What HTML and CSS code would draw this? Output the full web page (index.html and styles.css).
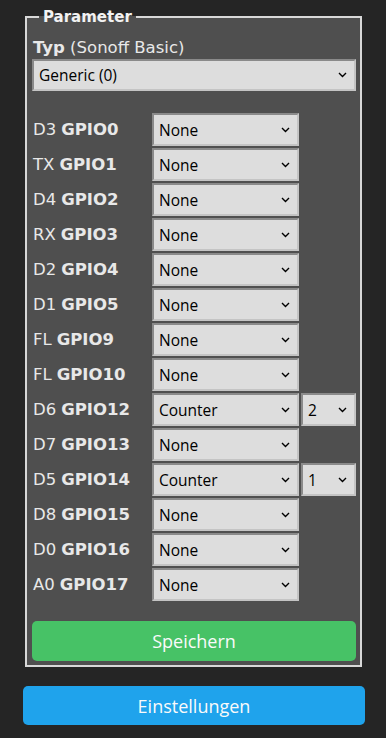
FILE: index.html
```html
<!DOCTYPE html>
<html>
<head>
<meta charset="utf-8">
<link rel="stylesheet" href="styles.css">
</head>
<body>
<div class="page">
  <fieldset class="box">
    <legend class="legend">Parameter</legend>
    <div class="typ"><b>Typ</b> (Sonoff Basic)</div>
    <div class="sel wide"><span>Generic (0)</span><svg class="chev" width="9" height="6" viewBox="0 0 9 6"><path d="M1 1l3.5 3.5L8 1" fill="none" stroke="#000" stroke-width="1.4"/></svg></div>
    <div class="grid">
      <div class="lbl">D3 <b>GPIO0</b></div><div class="sel"><span>None</span><svg class="chev" width="9" height="6" viewBox="0 0 9 6"><path d="M1 1l3.5 3.5L8 1" fill="none" stroke="#000" stroke-width="1.4"/></svg></div><div></div>
      <div class="lbl">TX <b>GPIO1</b></div><div class="sel"><span>None</span><svg class="chev" width="9" height="6" viewBox="0 0 9 6"><path d="M1 1l3.5 3.5L8 1" fill="none" stroke="#000" stroke-width="1.4"/></svg></div><div></div>
      <div class="lbl">D4 <b>GPIO2</b></div><div class="sel"><span>None</span><svg class="chev" width="9" height="6" viewBox="0 0 9 6"><path d="M1 1l3.5 3.5L8 1" fill="none" stroke="#000" stroke-width="1.4"/></svg></div><div></div>
      <div class="lbl">RX <b>GPIO3</b></div><div class="sel"><span>None</span><svg class="chev" width="9" height="6" viewBox="0 0 9 6"><path d="M1 1l3.5 3.5L8 1" fill="none" stroke="#000" stroke-width="1.4"/></svg></div><div></div>
      <div class="lbl">D2 <b>GPIO4</b></div><div class="sel"><span>None</span><svg class="chev" width="9" height="6" viewBox="0 0 9 6"><path d="M1 1l3.5 3.5L8 1" fill="none" stroke="#000" stroke-width="1.4"/></svg></div><div></div>
      <div class="lbl">D1 <b>GPIO5</b></div><div class="sel"><span>None</span><svg class="chev" width="9" height="6" viewBox="0 0 9 6"><path d="M1 1l3.5 3.5L8 1" fill="none" stroke="#000" stroke-width="1.4"/></svg></div><div></div>
      <div class="lbl">FL <b>GPIO9</b></div><div class="sel"><span>None</span><svg class="chev" width="9" height="6" viewBox="0 0 9 6"><path d="M1 1l3.5 3.5L8 1" fill="none" stroke="#000" stroke-width="1.4"/></svg></div><div></div>
      <div class="lbl">FL <b>GPIO10</b></div><div class="sel"><span>None</span><svg class="chev" width="9" height="6" viewBox="0 0 9 6"><path d="M1 1l3.5 3.5L8 1" fill="none" stroke="#000" stroke-width="1.4"/></svg></div><div></div>
      <div class="lbl">D6 <b>GPIO12</b></div><div class="sel"><span>Counter</span><svg class="chev" width="9" height="6" viewBox="0 0 9 6"><path d="M1 1l3.5 3.5L8 1" fill="none" stroke="#000" stroke-width="1.4"/></svg></div><div class="sel"><span>2</span><svg class="chev" width="9" height="6" viewBox="0 0 9 6"><path d="M1 1l3.5 3.5L8 1" fill="none" stroke="#000" stroke-width="1.4"/></svg></div>
      <div class="lbl">D7 <b>GPIO13</b></div><div class="sel"><span>None</span><svg class="chev" width="9" height="6" viewBox="0 0 9 6"><path d="M1 1l3.5 3.5L8 1" fill="none" stroke="#000" stroke-width="1.4"/></svg></div><div></div>
      <div class="lbl">D5 <b>GPIO14</b></div><div class="sel"><span>Counter</span><svg class="chev" width="9" height="6" viewBox="0 0 9 6"><path d="M1 1l3.5 3.5L8 1" fill="none" stroke="#000" stroke-width="1.4"/></svg></div><div class="sel"><span>1</span><svg class="chev" width="9" height="6" viewBox="0 0 9 6"><path d="M1 1l3.5 3.5L8 1" fill="none" stroke="#000" stroke-width="1.4"/></svg></div>
      <div class="lbl">D8 <b>GPIO15</b></div><div class="sel"><span>None</span><svg class="chev" width="9" height="6" viewBox="0 0 9 6"><path d="M1 1l3.5 3.5L8 1" fill="none" stroke="#000" stroke-width="1.4"/></svg></div><div></div>
      <div class="lbl">D0 <b>GPIO16</b></div><div class="sel"><span>None</span><svg class="chev" width="9" height="6" viewBox="0 0 9 6"><path d="M1 1l3.5 3.5L8 1" fill="none" stroke="#000" stroke-width="1.4"/></svg></div><div></div>
      <div class="lbl">A0 <b>GPIO17</b></div><div class="sel"><span>None</span><svg class="chev" width="9" height="6" viewBox="0 0 9 6"><path d="M1 1l3.5 3.5L8 1" fill="none" stroke="#000" stroke-width="1.4"/></svg></div><div></div>
    </div>
    <button class="btn save">Speichern</button>
  </fieldset>
  <button class="btn cfg">Einstellungen</button>
</div>
</body>
</html>
```
FILE: styles.css
```css
html, body {
  margin: 0;
  padding: 0;
  background: #252525;
}
body {
  font-family: "DejaVu Sans", Verdana, sans-serif;
  font-size: 16.5px;
  color: #e8e8e8;
}
.page {
  width: 342px;
  margin-left: 23px;
  padding-top: 8px;
  display: flex;
  flex-direction: column;
}
.box {
  margin: 0 3px 0 2px;
  padding: 0 4px 4px 5px;
  background: #4f4f4f;
  border: 2px solid #d8d8d8;
  display: flex;
  flex-direction: column;
}
.legend {
  padding: 0 4px;
  margin-left: 7px;
  font-weight: bold;
  color: #f2f2f2;
  font-size: 15px;
  line-height: 18px;
}
.typ {
  margin-top: 12px;
  line-height: 20px;
  padding-left: 1px;
}
.sel {
  box-sizing: border-box;
  height: 33px;
  background: #dddddd;
  color: #000;
  border-style: solid;
  border-width: 2px;
  border-color: #8a8a8a #c4c4c4 #c4c4c4 #8a8a8a;
  display: flex;
  align-items: center;
  justify-content: space-between;
  padding: 0 7px 0 5px;
  font-family: "Open Sans", "DejaVu Sans", sans-serif;
  font-size: 15.5px;
}
.wide {
  margin-top: 1px;
  height: 32px;
}
.chev {
  flex: none;
}
.grid {
  margin-top: 22px;
  display: grid;
  grid-template-columns: 118px 147px 55px;
  grid-auto-rows: 33px;
  column-gap: 2px;
  row-gap: 2px;
}
.lbl {
  display: flex;
  align-items: center;
  gap: 5px;
  padding-left: 1px;
}
.btn {
  border: 0;
  border-radius: 5px;
  color: #fafafa;
  font-family: "Open Sans", "DejaVu Sans", sans-serif;
  font-size: 18px;
  height: 40px;
  width: 100%;
  flex: none;
}
.save {
  margin-top: 20px;
  background: #47c266;
}
.cfg {
  margin-top: 19px;
  height: 39px;
  background: #1fa3ec;
}
```
